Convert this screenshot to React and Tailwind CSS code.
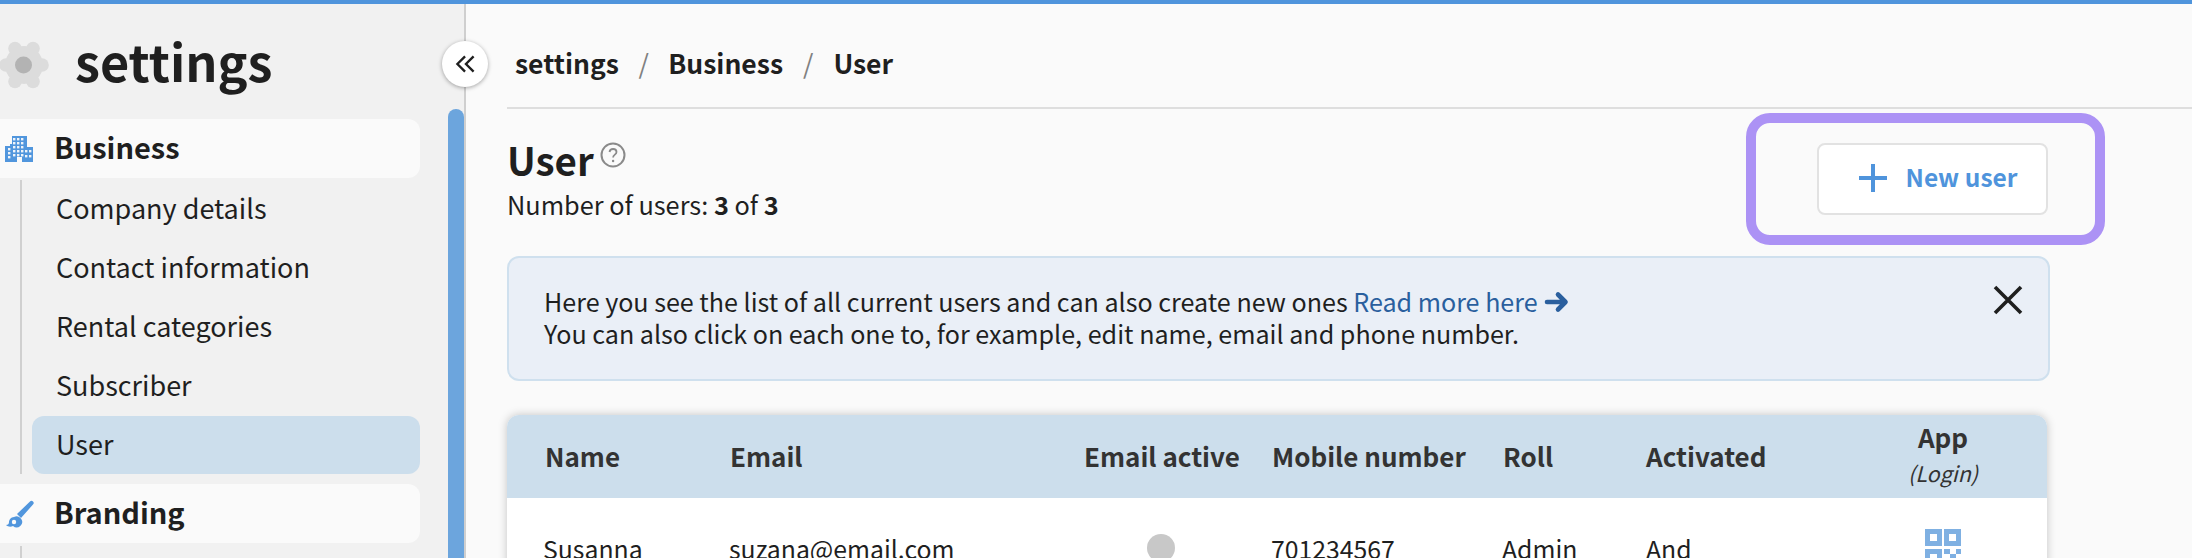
import React from "react";

function Gear() {
  const lobes = [0, 60, 120, 180, 240, 300];
  return (
    <svg width="50" height="50" viewBox="0 0 50 50" className="shrink-0 -ml-[1px]">
      <circle cx="25" cy="25" r="19" fill="#dcdcdc" />
      {lobes.map((a) => (
        <circle key={a} cx={25 + 18 * Math.cos((a * Math.PI) / 180)} cy={25 + 19 * Math.sin((a * Math.PI) / 180)} r="6.8" fill="#dcdcdc" />
      ))}
      <circle cx="24.5" cy="25" r="8.5" fill="#b3b3b3" />
    </svg>
  );
}

function Building() {
  return (
    <svg width="28" height="28" viewBox="0 0 28 28" className="shrink-0">
      <path d="M0 11h5V9h2V1h15v11h6v15H17v-5h-5v5H0z" fill="#5196dd" />
      {[[8, 3], [12, 3], [16, 3], [8, 7], [12, 7], [16, 7], [3, 13], [8, 11], [12, 11], [16, 11], [3, 17], [8, 15], [12, 15], [16, 15], [20, 15], [24, 15], [3, 21], [20, 20], [24, 20], [8, 19], [12, 19], [16, 19]].map(([x, y], i) => (
        <rect key={i} x={x} y={y} width="2.4" height="2.4" fill="#eef3f9" />
      ))}
    </svg>
  );
}

function Brush() {
  return (
    <svg width="30" height="30" viewBox="0 0 30 30" className="shrink-0">
      <path d="M12 15 L25 2.5 a1.5 1.5 0 0 1 3 3 L16 19 Z" fill="#5196dd" />
      <path d="M9 18 a5.5 5.5 0 1 1 -1 9 c-2 1 -5 1 -7 -1 c2 0 3 -1 3 -3 c0 -2 2 -5 5 -5 z" fill="#5196dd" />
      <circle cx="9" cy="23" r="2.2" fill="#fafafa" />
    </svg>
  );
}

function Qr() {
  return (
    <svg width="36" height="44" viewBox="0 0 36 44" className="block">
      <path fillRule="evenodd" d="M0 0h17v17H0zM5 5v7h7V5zM19 0h17v17H19zM24 5v7h7V5zM0 20h17v17H0zM5 25v7h7v-7z" fill="#7fb0e2" />
      <path d="M19 20h6v5h-6zM31 20h5v5h-5zM25 25h6v5h-6zM19 30h6v7h-6zM31 30h5v7h-5z" fill="#7fb0e2" />
    </svg>
  );
}

function SectionRow({ icon, label }) {
  return (
    <div className="h-[59px] w-[420px] rounded-r-xl bg-[#fafafa] flex items-center">
      <div className="w-[54px] pl-[5px] flex items-center">{icon}</div>
      <span className="text-[29px] leading-[40px] font-semibold text-[#1f1f1f] pb-[5px]">{label}</span>
    </div>
  );
}

function SubItem({ label, active }) {
  return (
    <div className={`h-[58px] rounded-xl flex items-center pl-[24px] pb-[3px] text-[27px] leading-[36px] text-[#1f1f1f] ${active ? "bg-[#ccdeec]" : ""}`}>
      {label}
    </div>
  );
}

const cols = "grid grid-cols-[185px_354px_188px_231px_143px_193px_208px] pl-[38px]";

export default function App() {
  return (
    <div className="h-[558px] w-[2192px] overflow-hidden border-t-4 border-[#4f94dc] bg-[#fafafa] flex font-['Noto_Sans_CJK_SC','Noto_Sans',sans-serif] text-[#1f1f1f] relative">
      {/* sidebar */}
      <aside className="w-[466px] shrink-0 bg-[#f1f1f1] border-r-2 border-[#cfcfcf] relative h-full">
        <div className="flex items-center h-[115px] pt-[6px]">
          <Gear />
          <span className="ml-[26px] -mt-[8px] text-[50.4px] leading-[64px] font-bold">settings</span>
        </div>
        <SectionRow icon={<Building />} label="Business" />
        <div className="ml-[20px] w-[400px] mt-[2px] border-l-2 border-[#d0d0d0] pl-[10px] flex flex-col gap-[1px]">
          <SubItem label="Company details" />
          <SubItem label="Contact information" />
          <SubItem label="Rental categories" />
          <SubItem label="Subscriber" />
          <SubItem label="User" active />
        </div>
        <div className="mt-[10px]">
          <SectionRow icon={<Brush />} label="Branding" />
        </div>
        <div className="ml-[20px] w-[2px] h-[14px] mt-[3px] bg-[#d0d0d0]" />
        <div className="absolute right-0 top-[105px] bottom-0 w-4 bg-[#6ca5dd] rounded-t-lg" />
      </aside>

      {/* collapse */}
      <div className="absolute left-[442px] top-[37px] w-[46px] h-[46px] rounded-full bg-white shadow-[0_1px_4px_rgba(0,0,0,0.35)] flex items-center justify-center z-10">
        <svg width="21" height="18" viewBox="0 0 22 20" fill="none" stroke="#1f1f1f" strokeWidth="2.6">
          <path d="M10.5 1.5 2 10l8.5 8.5M20 1.5 11.5 10 20 18.5" />
        </svg>
      </div>

      {/* main */}
      <main className="flex-1 min-w-0 pl-[41px]">
        <div className="h-[105px] border-b-2 border-[#dedede] flex items-center pl-[8px] pt-[14px] text-[26.5px] leading-[36px] font-semibold">
          <span>settings</span>
          <span className="mx-[19.5px] font-normal text-[#808080]">/</span>
          <span>Business</span>
          <span className="mx-[20px] font-normal text-[#808080]">/</span>
          <span>User</span>
        </div>

        <div className="w-[1543px] relative">
          <div className="pt-[24px] h-[147px]">
            <div className="flex items-start">
              <span className="text-[38.5px] leading-[52px] font-semibold">User</span>
              <svg width="26" height="26" viewBox="0 0 26 26" fill="none" className="ml-[6px] mt-[9px]">
                <circle cx="13" cy="13" r="11.5" stroke="#8a8a8a" strokeWidth="2" />
                <path d="M9.5 10c.3-2 1.8-3 3.6-3 2 0 3.4 1.2 3.4 3 0 2.6-3.4 2.6-3.4 5.4" stroke="#8a8a8a" strokeWidth="1.8" />
                <circle cx="13.1" cy="19" r="1.2" fill="#8a8a8a" />
              </svg>
            </div>
            <div className="text-[25.3px] leading-[34px] mt-[2px]">
              Number of users: <span className="font-semibold">3</span> of <span className="font-semibold">3</span>
            </div>
          </div>

          <button className="absolute left-[1310px] top-[34px] w-[231px] h-[72px] bg-white border-2 border-[#e2e2e2] rounded-lg flex items-center justify-center gap-[18px] pl-[10px] text-[#4f94dc] text-[24.5px] leading-[34px] font-semibold">
            <svg width="30" height="30" viewBox="0 0 30 30" stroke="#4f94dc" strokeWidth="4" fill="none" className="-mt-[2px]">
              <path d="M15 1v28M1 15h28" />
            </svg>
            <span className="-mt-[4px]">New user</span>
          </button>

          <div className="h-[125px] rounded-xl bg-[#eaeff7] border-2 border-[#cfe0ee] pl-[35px] pt-[27px] relative text-[25.1px] leading-[32px]">
            <div className="flex items-center whitespace-pre">
              <span>Here you see the list of all current users and can also create new ones </span>
              <span className="text-[#2a5f9e]">Read more here</span>
              <svg width="25" height="22" viewBox="0 0 25 22" fill="none" stroke="#2a5f9e" strokeWidth="4.6" strokeLinecap="round" strokeLinejoin="round" className="ml-[6px] mt-[2px]">
                <path d="M3 11h18M14 3.5 21.5 11 14 18.5" />
              </svg>
            </div>
            <div>You can also click on each one to, for example, edit name, email and phone number.</div>
            <svg width="30" height="30" viewBox="0 0 30 30" stroke="#1f1f1f" strokeWidth="3.6" fill="none" className="absolute right-[25px] top-[27px]">
              <path d="M2 2l26 26M28 2 2 28" />
            </svg>
          </div>

          <div className="mt-[34px] w-[1540px] rounded-t-xl bg-white shadow-[0_0_10px_rgba(0,0,0,0.22)] overflow-hidden">
            <div className={`${cols} h-[83px] bg-[#ccdeec] items-center text-[26px] leading-[34px] font-semibold text-[#333] pb-[2px]`}>
              <span>Name</span>
              <span>Email</span>
              <span className="whitespace-nowrap">Email active</span>
              <span>Mobile number</span>
              <span>Roll</span>
              <span>Activated</span>
              <div className="flex flex-col items-center mb-[8px]">
                <span className="leading-[36px]">App</span>
                <span className="text-[21.5px] leading-[24px] mt-[6px] italic font-normal">(Login)</span>
              </div>
            </div>
            <div className={`${cols} h-[120px] pt-[33px] items-start text-[24.8px] leading-[34px]`}>
              <span className="-ml-[2px]">Susanna</span>
              <span className="-ml-[1px]">suzana@email.com</span>
              <div className="w-[154px] flex justify-center pt-[3px]">
                <span className="block w-[28px] h-[28px] rounded-full bg-[#c8c8c8]" />
              </div>
              <span className="-ml-[1px]">701234567</span>
              <span className="-ml-[1px]">Admin</span>
              <span>And</span>
              <div className="flex justify-center -mt-[2px]">
                <Qr />
              </div>
            </div>
          </div>

          <div className="absolute left-[1239px] top-[4px] w-[359px] h-[132px] rounded-[24px] border-[10px] border-[#ac92f5]" />
        </div>
      </main>
    </div>
  );
}
